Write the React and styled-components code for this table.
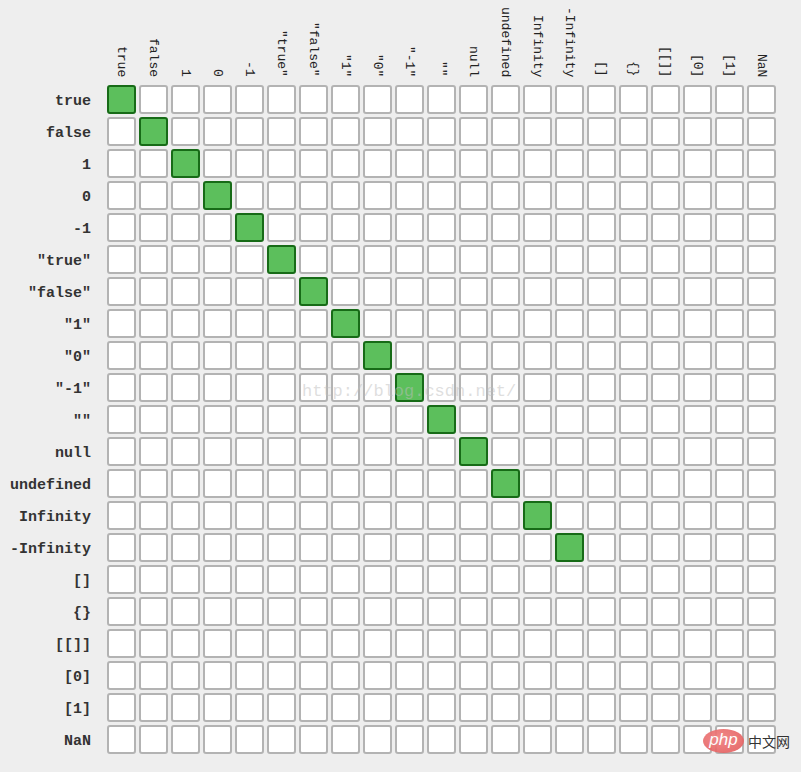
import React from 'react';
import styled, {createGlobalStyle} from 'styled-components';

const GlobalStyle = createGlobalStyle`
  html, body {
    margin: 0;
    padding: 0;
    background: #eeeeee;
  }
`;

// only primitives are strictly equal to themselves; objects and NaN are not
const values = [
    {label: 'true', self: true},
    {label: 'false', self: true},
    {label: '1', self: true},
    {label: '0', self: true},
    {label: '-1', self: true},
    {label: '"true"', self: true},
    {label: '"false"', self: true},
    {label: '"1"', self: true},
    {label: '"0"', self: true},
    {label: '"-1"', self: true},
    {label: '""', self: true},
    {label: 'null', self: true},
    {label: 'undefined', self: true},
    {label: 'Infinity', self: true},
    {label: '-Infinity', self: true},
    {label: '[]', self: false},
    {label: '{}', self: false},
    {label: '[[]]', self: false},
    {label: '[0]', self: false},
    {label: '[1]', self: false},
    {label: 'NaN', self: false},
];

const Root = styled.div`
  position: relative;
  width: 801px;
  height: 772px;
  background: #eeeeee;
  overflow: hidden;
`;

const Table = styled.div`
  display: grid;
  grid-template-columns: 104px repeat(${p => p.count}, 29px);
  grid-template-rows: 82px repeat(${p => p.count}, 29px);
  column-gap: 3px;
  row-gap: 3px;
`;

const Corner = styled.div``;

const ColHead = styled.div`
  display: flex;
  justify-content: center;
  align-items: flex-end;
  padding-bottom: 5px;
`;

const ColLabel = styled.span`
  writing-mode: vertical-rl;
  font-family: "Liberation Mono", "DejaVu Sans Mono", monospace;
  font-size: 13px;
  line-height: 1;
  color: #222;
  white-space: nowrap;
`;

const RowLabel = styled.div`
  display: flex;
  align-items: center;
  justify-content: flex-end;
  padding-right: 13px;
  padding-top: 3px;
  font-family: "Liberation Mono", "DejaVu Sans Mono", monospace;
  font-weight: bold;
  font-size: 15px;
  color: #333;
  white-space: nowrap;
`;

const Cell = styled.div`
  box-sizing: border-box;
  border: 2px solid ${p => (p.$match ? '#176b17' : '#b3b3b3')};
  border-radius: 3px;
  background: ${p => (p.$match ? '#5cbf5c' : '#ffffff')};
`;

const Watermark = styled.div`
  position: absolute;
  left: 302px;
  top: 382px;
  font-family: "Liberation Mono", monospace;
  font-size: 17px;
  color: rgba(190, 190, 190, 0.5);
  pointer-events: none;
`;

const Logo = styled.div`
  position: absolute;
  left: 703px;
  top: 729px;
  display: flex;
  align-items: center;
  gap: 4px;
`;

const LogoBadge = styled.div`
  width: 41px;
  height: 24px;
  border-radius: 50%;
  background: radial-gradient(ellipse at 40% 40%, #f08080, #e35a5a);
  opacity: 0.92;
  display: flex;
  align-items: center;
  justify-content: center;
  color: #fff;
  font-family: "Liberation Sans", Arial, sans-serif;
  font-style: italic;
  font-size: 17px;
  line-height: 1;
  padding-bottom: 3px;
  box-sizing: border-box;
`;

const LogoText = styled.span`
  font-family: "Noto Sans CJK SC", sans-serif;
  font-size: 14px;
  color: #333;
`;

const App = () => {
    return (
        <Root>
            <GlobalStyle/>
            <Table count={values.length}>
                <Corner/>
                {values.map(v => (
                    <ColHead key={'h' + v.label}>
                        <ColLabel>{v.label}</ColLabel>
                    </ColHead>
                ))}
                {values.map((row, i) => (
                    <React.Fragment key={'r' + row.label}>
                        <RowLabel>{row.label}</RowLabel>
                        {values.map((col, j) => (
                            <Cell key={col.label} $match={i === j && row.self}/>
                        ))}
                    </React.Fragment>
                ))}
            </Table>
            <Watermark>http://blog.csdn.net/</Watermark>
            <Logo>
                <LogoBadge>php</LogoBadge>
                <LogoText>中文网</LogoText>
            </Logo>
        </Root>
    );
};

export default App;
